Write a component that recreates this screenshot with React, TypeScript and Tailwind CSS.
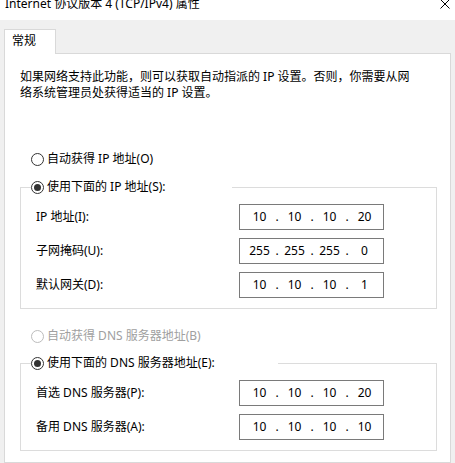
import React from "react";

const FONT = '"Noto Sans", "Noto Sans CJK SC", sans-serif';

function Radio({ checked, disabled }: { checked?: boolean; disabled?: boolean }) {
  return (
    <div
      className={
        "w-[13px] h-[13px] rounded-full border bg-white flex items-center justify-center flex-none " +
        (disabled ? "border-[#bcbcbc]" : "border-[#333333]")
      }
    >
      {checked && <div className="w-[7px] h-[7px] rounded-full bg-[#333333]" />}
    </div>
  );
}

function RadioRow({ label, checked, disabled }: { label: string; checked?: boolean; disabled?: boolean }) {
  return (
    <div className="flex items-center h-[16px]">
      <Radio checked={checked} disabled={disabled} />
      <span className={"ml-[3px] whitespace-nowrap " + (disabled ? "text-[#a0a0a0]" : "text-black")}>{label}</span>
    </div>
  );
}

function IpInput({ octets }: { octets: string[] }) {
  return (
    <div className="w-[145px] h-[26px] border border-[#7a7a7a] bg-white flex items-center pl-[7px] flex-none">
      {octets.map((o, i) => (
        <React.Fragment key={i}>
          <span className="w-[25px] text-center">{o}</span>
          {i < 3 && <span className="w-[10px] text-center">.</span>}
        </React.Fragment>
      ))}
    </div>
  );
}

function Row({ label, octets }: { label: string; octets: string[] }) {
  return (
    <div className="flex items-center pl-[15px]">
      <span className="w-[203px] whitespace-nowrap">{label}</span>
      <IpInput octets={octets} />
    </div>
  );
}

function Group({
  label,
  labelWidth,
  rows,
}: {
  label: string;
  labelWidth: string;
  rows: { label: string; octets: string[] }[];
}) {
  return (
    <div className="ml-[15px] w-[417px]">
      <div className="flex h-[14px]">
        <div className="w-[11px] h-[7px] mt-[7px] border-l border-t border-[#dcdcdc] flex-none" />
        <div className={"flex items-center flex-none " + labelWidth}>
          <RadioRow label={label} checked />
        </div>
        <div className="flex-1 h-[7px] mt-[7px] border-t border-r border-[#dcdcdc]" />
      </div>
      <div className="border-l border-r border-b border-[#dcdcdc] pt-[10px] flex flex-col gap-[8px] pb-[10px]">
        {rows.map((r, i) => (
          <Row key={i} label={r.label} octets={r.octets} />
        ))}
      </div>
    </div>
  );
}

export default function App() {
  return (
    <div
      className="w-[455px] h-[463px] bg-[#f0f0f0] overflow-hidden flex flex-col text-[12px] leading-[16px] text-black"
      style={{ fontFamily: FONT }}
    >
      <div className="h-[20px] bg-white flex flex-none">
        <span className="ml-[5px] mt-[-4px] whitespace-nowrap">Internet 协议版本 4 (TCP/IPv4) 属性</span>
        <svg className="ml-auto mr-[5px] mt-[-1px]" width="10" height="10" viewBox="0 0 10 10">
          <path d="M0.5 0.5 L9.5 9.5 M9.5 0.5 L0.5 9.5" stroke="#000" strokeWidth="1" fill="none" />
        </svg>
      </div>
      <div className="pt-[9px] pl-[4px] flex flex-none">
        <div className="w-[52px] h-[25px] bg-white border-l border-t border-r border-[#d9d9d9] relative z-10 mb-[-1px] pl-[7px] pt-[3px]">
          常规
        </div>
      </div>
      <div className="ml-[4px] w-[447px] flex-1 border border-[#d9d9d9] bg-white flex flex-col">
        <p className="pl-[15px] pt-[15px] whitespace-nowrap">
          如果网络支持此功能，则可以获取自动指派的 IP 设置。否则，你需要从网
          <br />
          络系统管理员处获得适当的 IP 设置。
        </p>
        <div className="ml-[26px] mt-[50px]">
          <RadioRow label="自动获得 IP 地址(O)" />
        </div>
        <div className="mt-[13px]">
          <Group
            label="使用下面的 IP 地址(S):"
            labelWidth="w-[201px]"
            rows={[
              { label: "IP 地址(I):", octets: ["10", "10", "10", "20"] },
              { label: "子网掩码(U):", octets: ["255", "255", "255", "0"] },
              { label: "默认网关(D):", octets: ["10", "10", "10", "1"] },
            ]}
          />
        </div>
        <div className="ml-[26px] mt-[19px]">
          <RadioRow label="自动获得 DNS 服务器地址(B)" disabled />
        </div>
        <div className="mt-[12px]">
          <Group
            label="使用下面的 DNS 服务器地址(E):"
            labelWidth="w-[247px]"
            rows={[
              { label: "首选 DNS 服务器(P):", octets: ["10", "10", "10", "20"] },
              { label: "备用 DNS 服务器(A):", octets: ["10", "10", "10", "10"] },
            ]}
          />
        </div>
      </div>
    </div>
  );
}
